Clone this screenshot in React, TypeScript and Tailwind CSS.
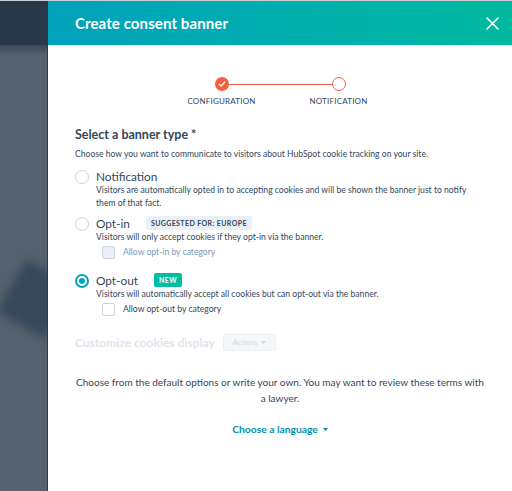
import React from "react";

const font = { fontFamily: '"Lato", "Liberation Sans", sans-serif' };

function Radio({ checked }: { checked?: boolean }) {
  return checked ? (
    <div className="w-[14px] h-[14px] rounded-full border-2 border-[#00a4bd] flex items-center justify-center shrink-0 bg-white">
      <div className="w-[6px] h-[6px] rounded-full bg-[#00a4bd]" />
    </div>
  ) : (
    <div className="w-[14px] h-[14px] rounded-full border border-[#cbd6e2] shrink-0 bg-white" />
  );
}

export default function App() {
  return (
    <div className="w-[512px] h-[491px] flex flex-col overflow-hidden bg-white" style={font}>
      <div className="h-[1px] bg-[#c9cfd4] shrink-0" />
      <div className="flex-1 flex">
        <div className="w-[48px] shrink-0 flex flex-col bg-[#55616d] relative overflow-hidden">
          <div className="h-[44px] bg-[#29394a]" />
          <div className="h-[10px] bg-gradient-to-b from-[#3a4858] to-[#55616d]" />
          <div className="absolute left-[8px] top-[268px] w-[55px] h-[60px] bg-[#2f4257] blur-[5px] rotate-[30deg] opacity-80" />
          <div className="absolute right-0 top-0 bottom-0 w-[1px] bg-[#2b3b4c]" />
        </div>
        <div className="flex-1 flex flex-col">
          <div className="h-[44px] shrink-0 bg-gradient-to-r from-[#00a2bb] to-[#00b99f] flex items-center justify-between pl-[27px] pr-[13px]">
            <div className="text-white font-bold text-[15px] tracking-[0.1px]">Create consent banner</div>
            <svg width="13" height="13" viewBox="0 0 13 13" fill="none">
              <path d="M1 1L12 12M12 1L1 12" stroke="white" strokeWidth="1.6" strokeLinecap="round" />
            </svg>
          </div>
          <div className="flex-1 flex flex-col px-[27px]">
            {/* stepper */}
            <div className="flex justify-center mt-[32px]">
              <div className="flex items-start">
                <div className="flex flex-col items-center w-[80px]">
                  <div className="w-[14px] h-[14px] rounded-full bg-[#f2603f] flex items-center justify-center relative z-10">
                    <svg width="8" height="8" viewBox="0 0 8 8" fill="none">
                      <path d="M1.2 4.2L3.2 6L6.8 2" stroke="white" strokeWidth="1.3" strokeLinecap="round" strokeLinejoin="round" />
                    </svg>
                  </div>
                  <div className="mt-[4px] text-[8px] tracking-[0.2px] text-[#33475b]">CONFIGURATION</div>
                </div>
                <div className="h-[1px] bg-[#f2603f] mt-[7px] -mx-[33px] relative z-0 w-[103px]" />
                <div className="flex flex-col items-center w-[80px]">
                  <div className="w-[14px] h-[14px] rounded-full border border-[#f2603f] bg-white relative z-10" />
                  <div className="mt-[4px] text-[8px] tracking-[0.2px] text-[#33475b]">NOTIFICATION</div>
                </div>
              </div>
            </div>

            <div className="mt-[19px] text-[12.5px] font-bold text-[#33475b]">Select a banner type *</div>
            <div className="mt-[3px] text-[8.6px] text-[#33475b]">
              Choose how you want to communicate to visitors about HubSpot cookie tracking on your site.
            </div>

            {/* Notification */}
            <div className="mt-[7px] flex gap-[7px]">
              <div className="pt-[2px] w-[14px]"><Radio /></div>
              <div className="flex-1">
                <div className="text-[11.8px] text-[#33475b] leading-[17px]">Notification</div>
                <div className="text-[8.6px] leading-[13px] text-[#33475b] pr-[8px] mt-[-1px]">
                  Visitors are automatically opted in to accepting cookies and will be shown the banner just to notify them of that fact.
                </div>
              </div>
            </div>

            {/* Opt-in */}
            <div className="mt-[5px] flex gap-[7px]">
              <div className="pt-[2px] w-[14px]"><Radio /></div>
              <div className="flex-1">
                <div className="flex items-center gap-[16px]">
                  <div className="text-[11.8px] text-[#33475b] leading-[17px]">Opt-in</div>
                  <div className="bg-[#eaf0f6] rounded-[2px] px-[5px] h-[14px] flex items-center text-[7px] font-bold tracking-[0.4px] text-[#33475b]">
                    SUGGESTED FOR: EUROPE
                  </div>
                </div>
                <div className="text-[8.6px] leading-[13px] text-[#33475b] mt-[-1px]">
                  Visitors will only accept cookies if they opt-in via the banner.
                </div>
                <div className="mt-[2px] flex items-center gap-[8px] ml-[6px]">
                  <div className="w-[13px] h-[13px] rounded-[2px] border border-[#cbd6e2] bg-[#eaf0f6]" />
                  <div className="text-[8.6px] text-[#7c98b6]">Allow opt-in by category</div>
                </div>
              </div>
            </div>

            {/* Opt-out */}
            <div className="mt-[13px] flex gap-[7px]">
              <div className="pt-[2px] w-[14px]"><Radio checked /></div>
              <div className="flex-1">
                <div className="flex items-center gap-[16px]">
                  <div className="text-[11.8px] text-[#33475b] leading-[17px]">Opt-out</div>
                  <div className="bg-[#00bda5] rounded-[2px] px-[5px] h-[14px] flex items-center text-[7px] font-bold tracking-[0.4px] text-white">
                    NEW
                  </div>
                </div>
                <div className="text-[8.6px] leading-[13px] text-[#33475b] whitespace-nowrap mt-[-1px]">
                  Visitors will automatically accept all cookies but can opt-out via the banner.
                </div>
                <div className="mt-[2px] flex items-center gap-[8px] ml-[6px]">
                  <div className="w-[13px] h-[13px] rounded-[2px] border border-[#cbd6e2] bg-white" />
                  <div className="text-[8.6px] text-[#33475b]">Allow opt-out by category</div>
                </div>
              </div>
            </div>

            {/* Customize */}
            <div className="mt-[18px] flex items-center gap-[8px]">
              <div className="text-[12px] font-bold text-[#dfe3eb]">Customize cookies display</div>
              <div className="h-[17px] px-[9px] border border-[#eaf0f6] bg-[#f5f8fa] rounded-[2px] flex items-center gap-[3px] text-[7.5px] text-[#d0d8e1]">
                Actions
                <svg width="5" height="3" viewBox="0 0 5 3"><path d="M0 0h5L2.5 3z" fill="#d0d8e1" /></svg>
              </div>
            </div>

            <div className="mt-[22px] text-center text-[10px] leading-[16px] text-[#33475b]">
              Choose from the default options or write your own. You may want to review these terms with a lawyer.
            </div>

            <div className="mt-[16px] flex justify-center items-center gap-[5px]">
              <div className="text-[10.3px] font-bold text-[#0091ae]">Choose a language</div>
              <svg width="5" height="3" viewBox="0 0 5 3"><path d="M0 0h5L2.5 3z" fill="#0091ae" /></svg>
            </div>
          </div>
        </div>
      </div>
    </div>
  );
}
